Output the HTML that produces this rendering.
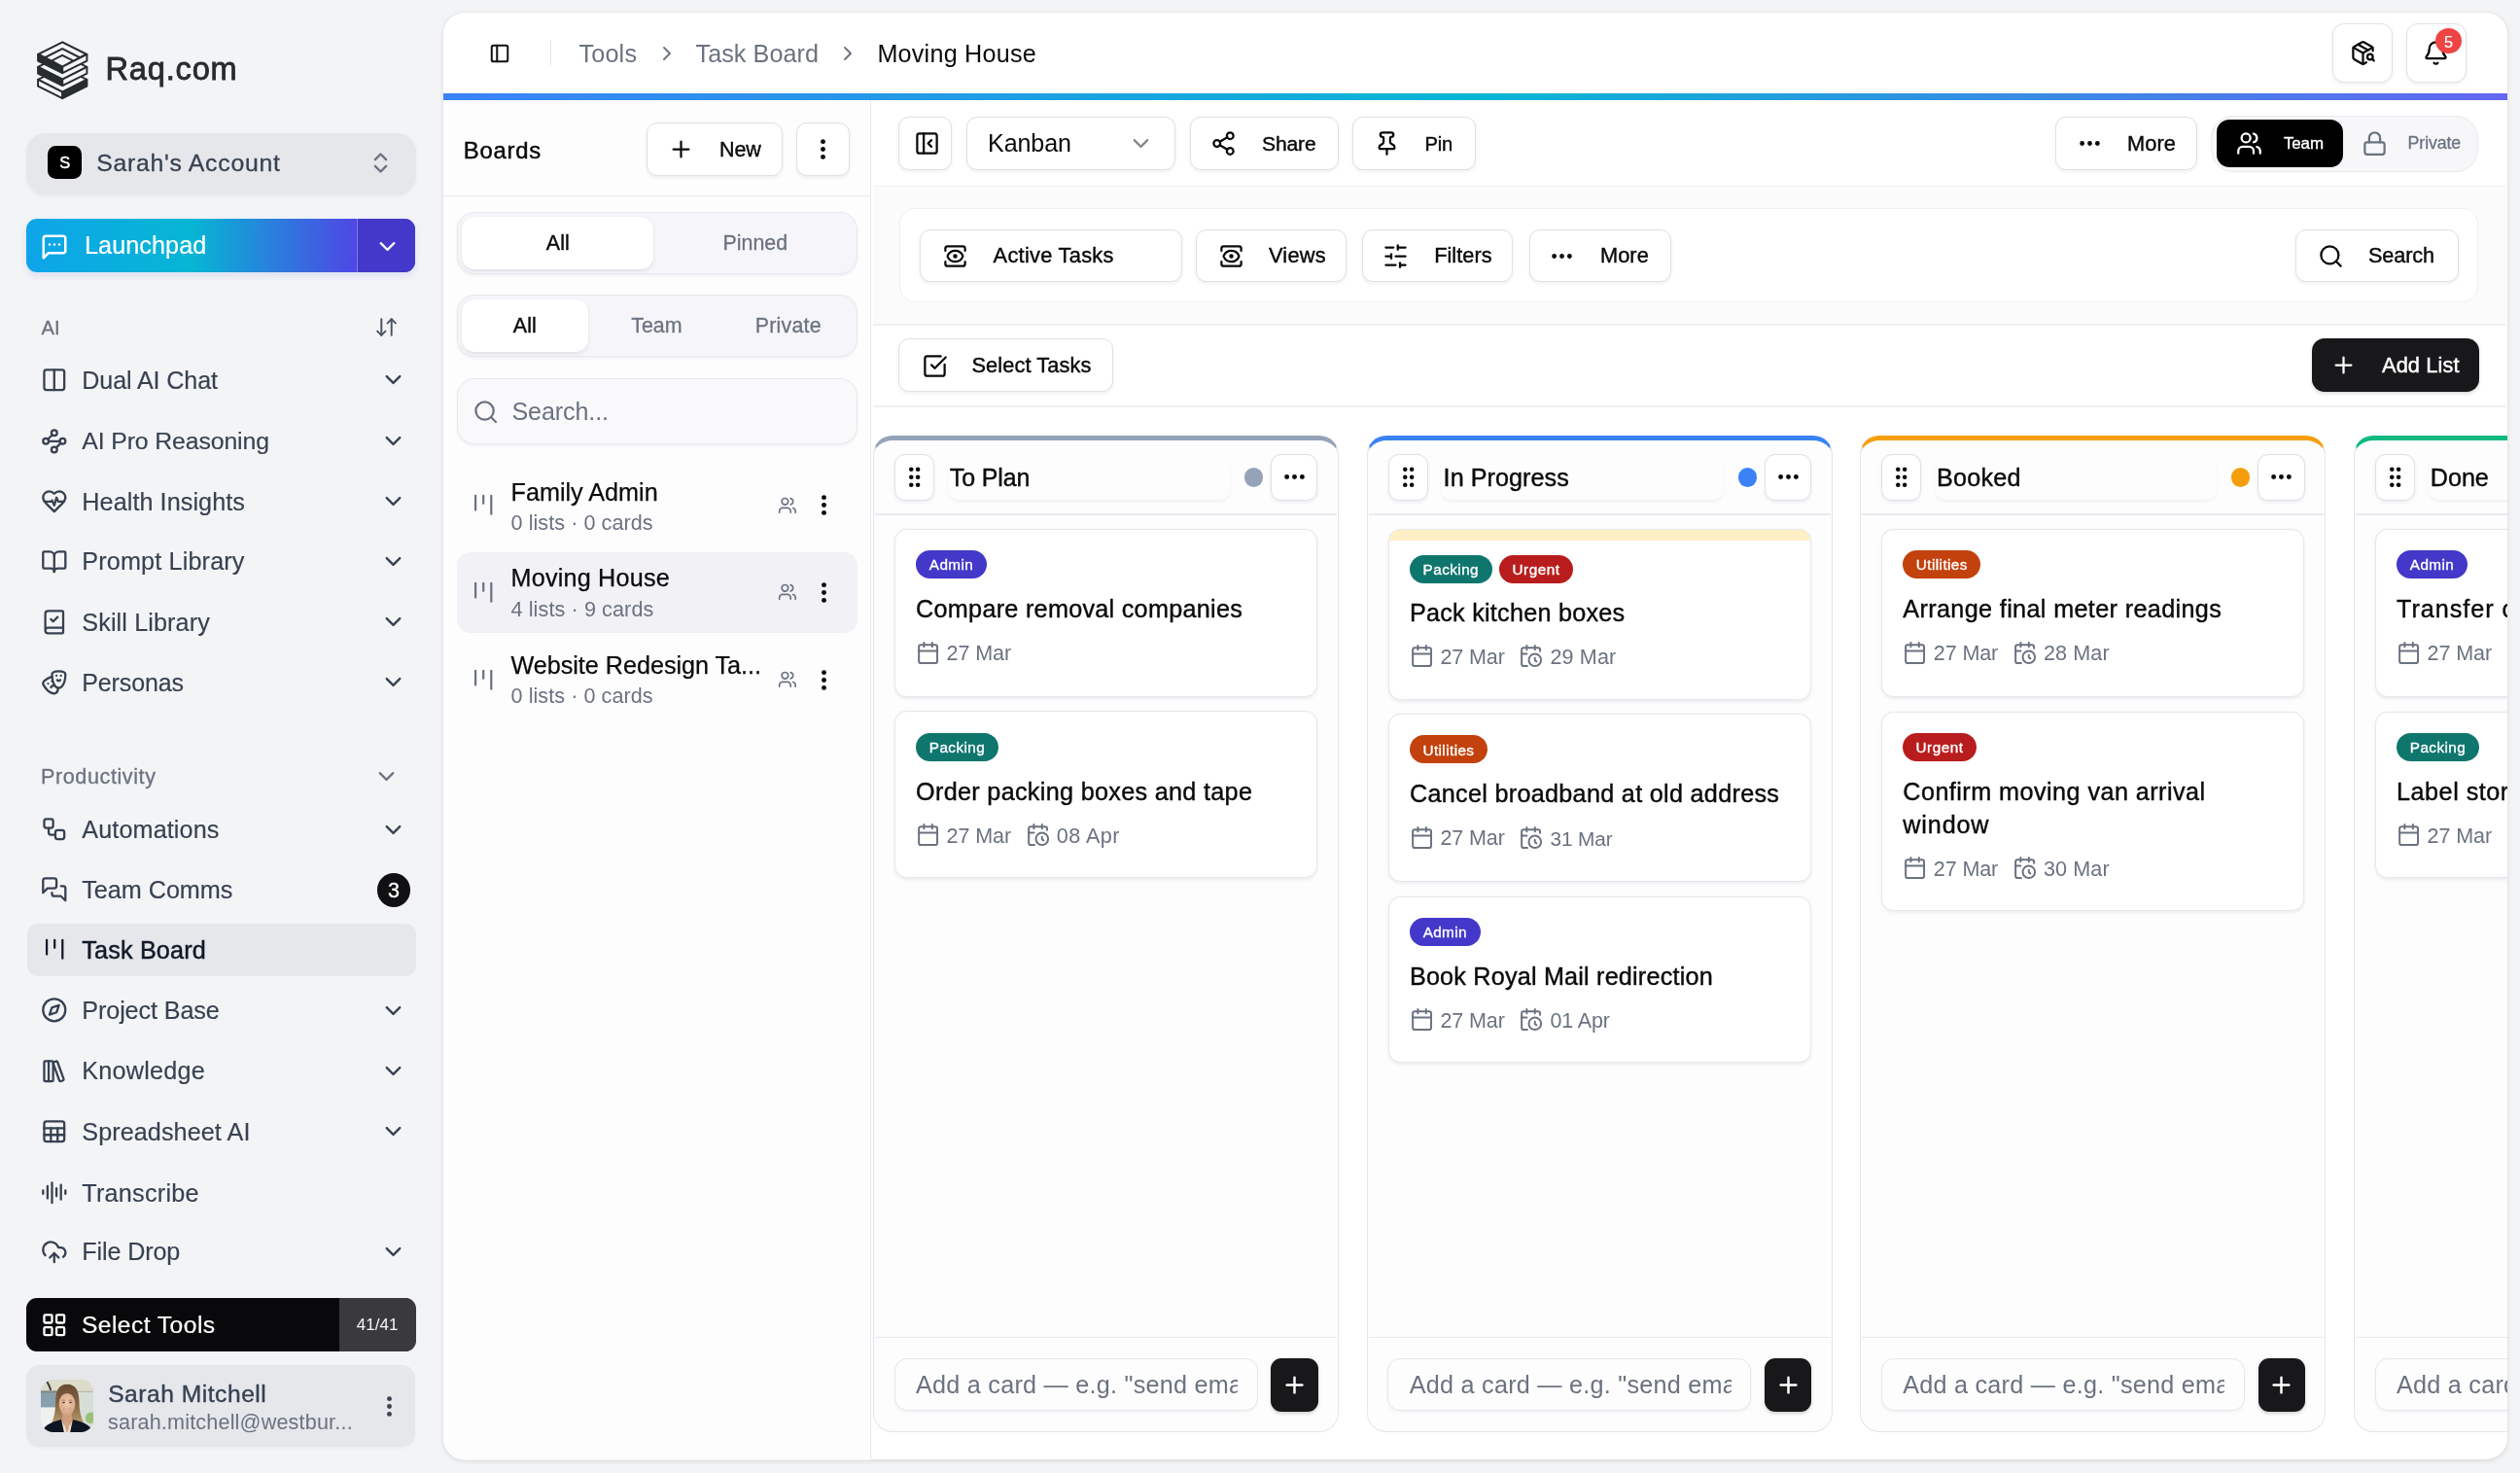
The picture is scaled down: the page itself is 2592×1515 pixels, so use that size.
<!DOCTYPE html>
<html lang="en"><head><meta charset="utf-8"><title>Task Board - Moving House</title>
<style>
html,body{margin:0;padding:0}
body{width:2592px;height:1515px;position:relative;overflow:hidden;background:#f3f4f6;font-family:"Liberation Sans",sans-serif;}
.t{position:absolute;white-space:nowrap;display:block}
.i{position:absolute;display:block;overflow:visible}
.b{position:absolute;box-sizing:border-box}
.btn{position:absolute;box-sizing:border-box;background:#fff;border:1.8px solid #e0e0e8;border-radius:11px;box-shadow:0 1.8px 3.6px rgba(15,23,42,.065)}
.clip{position:absolute;left:0;top:0;width:2592px;height:1515px;clip-path:inset(13.4px 13px 13.6px 456px round 21.6px)}
#app,#txt{position:absolute;left:0;top:0;width:2592px;height:1515px}
#txt{will-change:transform}
</style></head>
<body>
<div id="app">
<svg class="i" style="left:37.9px;top:41.9px" width="52.6" height="60.2" viewBox="120 120 1076 1232"><g stroke="#282d30" stroke-width="40" stroke-linejoin="round"><polygon points="657,679 1172,937 657,1195 142,937" fill="#f3f4f6"/><polygon points="142,937 657,1195 657,1330 142,1072" fill="#f3f4f6"/><polygon points="657,1195 1172,937 1172,1072 657,1330" fill="#282d30"/><polygon points="657,413 1172,671 657,929 142,671" fill="#f3f4f6"/><polygon points="142,671 657,929 657,1064 142,806" fill="#282d30"/><polygon points="657,929 1172,671 1172,806 657,1064" fill="#f3f4f6"/><polygon points="657,147 1172,405 657,663 142,405" fill="#282d30"/><polygon points="142,405 657,663 657,798 142,540" fill="#282d30"/><polygon points="657,663 1172,405 1172,540 657,798" fill="#f3f4f6"/><g stroke="none" fill="#f3f4f6"><polygon points="655,172 1114,402 1023,448 655,264 287,448 196,402"/><polygon points="655,310 977,471 886,517 655,402 424,517 333,471"/><polygon points="655,447 840,541 655,640 470,541"/></g></g></svg>
<div class="b" style="left:27px;top:136.6px;width:400.6px;height:63px;background:#e5e7eb;border-radius:20px;box-shadow:0 1.8px 3.6px rgba(0,0,0,.05)"></div>
<div class="b" style="left:49.4px;top:150px;width:34.6px;height:34.4px;background:#000;border-radius:8.5px"></div>
<svg class="i" style="left:378.1px;top:153.9px" width="27" height="27" viewBox="0 0 24 24" fill="none" stroke="#6b7280" stroke-width="2.1" stroke-linecap="round" stroke-linejoin="round"><path d="m7 15 5 5 5-5"/><path d="m7 9 5-5 5 5"/></svg>
<div class="b" style="left:27px;top:225px;width:400.3px;height:55px;border-radius:11px;background:linear-gradient(90deg,#0ea5e9 0%,#06b6d4 42.5%,#4f46e5 85%,#4f46e5 100%);box-shadow:0 3.6px 7px rgba(60,90,220,.12)"></div>
<div class="b" style="left:367px;top:225px;width:60.3px;height:55px;border-radius:0 11px 11px 0;background:#4338ca;border-left:1.5px solid rgba(255,255,255,.35)"></div>
<svg class="i" style="left:40.9px;top:239.3px" width="30" height="30" viewBox="0 0 24 24" fill="none" stroke="#fff" stroke-width="2" stroke-linecap="round" stroke-linejoin="round"><path d="M21 15a2 2 0 0 1-2 2H7l-4 4V5a2 2 0 0 1 2-2h14a2 2 0 0 1 2 2z"/><path d="M8 10h.01"/><path d="M12 10h.01"/><path d="M16 10h.01"/></svg>
<svg class="i" style="left:385.3px;top:239.5px" width="27" height="27" viewBox="0 0 24 24" fill="none" stroke="#fff" stroke-width="2" stroke-linecap="round" stroke-linejoin="round"><path d="m6 9 6 6 6-6"/></svg>
<svg class="i" style="left:384.5px;top:324px" width="25" height="25" viewBox="0 0 24 24" fill="none" stroke="#4b5563" stroke-width="1.9" stroke-linecap="round" stroke-linejoin="round"><path d="m3 16 4 4 4-4"/><path d="M7 20V4"/><path d="m21 8-4-4-4 4"/><path d="M17 4v16"/></svg>
<div class="b" style="left:28px;top:949.6px;width:400px;height:54.9px;background:#e5e7eb;border-radius:11px"></div>
<svg class="i" style="left:42.4px;top:376.8px" width="27.6" height="27.6" viewBox="0 0 24 24" fill="none" stroke="#374151" stroke-width="2" stroke-linecap="round" stroke-linejoin="round"><rect width="18" height="18" x="3" y="3" rx="2"/><path d="M12 3v18"/></svg>
<svg class="i" style="left:390.5px;top:377.1px" width="27" height="27" viewBox="0 0 24 24" fill="none" stroke="#374151" stroke-width="2.1" stroke-linecap="round" stroke-linejoin="round"><path d="m6 9 6 6 6-6"/></svg>
<svg class="i" style="left:42.4px;top:439.6px" width="27.6" height="27.6" viewBox="0 0 24 24" fill="none" stroke="#374151" stroke-width="2" stroke-linecap="round" stroke-linejoin="round"><circle cx="12" cy="4.5" r="2.5"/><path d="m10.2 6.3-3.9 3.9"/><circle cx="4.5" cy="12" r="2.5"/><path d="M7 12h10"/><circle cx="19.5" cy="12" r="2.5"/><path d="m13.8 17.7 3.9-3.9"/><circle cx="12" cy="19.5" r="2.5"/></svg>
<svg class="i" style="left:390.5px;top:439.9px" width="27" height="27" viewBox="0 0 24 24" fill="none" stroke="#374151" stroke-width="2.1" stroke-linecap="round" stroke-linejoin="round"><path d="m6 9 6 6 6-6"/></svg>
<svg class="i" style="left:42.4px;top:501.6px" width="27.6" height="27.6" viewBox="0 0 24 24" fill="none" stroke="#374151" stroke-width="2" stroke-linecap="round" stroke-linejoin="round"><path d="M19 14c1.49-1.46 3-3.21 3-5.5A5.5 5.5 0 0 0 16.5 3c-1.76 0-3 .5-4.5 2-1.5-1.5-2.74-2-4.5-2A5.5 5.5 0 0 0 2 8.5c0 2.3 1.5 4.05 3 5.5l7 7Z"/><path d="M3.22 12H9.5l.5-1 2 4.5 2-7 1.5 3.5h5.27"/></svg>
<svg class="i" style="left:390.5px;top:501.9px" width="27" height="27" viewBox="0 0 24 24" fill="none" stroke="#374151" stroke-width="2.1" stroke-linecap="round" stroke-linejoin="round"><path d="m6 9 6 6 6-6"/></svg>
<svg class="i" style="left:42.4px;top:563.5px" width="27.6" height="27.6" viewBox="0 0 24 24" fill="none" stroke="#374151" stroke-width="2" stroke-linecap="round" stroke-linejoin="round"><path d="M12 7v14"/><path d="M3 18a1 1 0 0 1-1-1V4a1 1 0 0 1 1-1h5a4 4 0 0 1 4 4 4 4 0 0 1 4-4h5a1 1 0 0 1 1 1v13a1 1 0 0 1-1 1h-6a3 3 0 0 0-3 3 3 3 0 0 0-3-3z"/></svg>
<svg class="i" style="left:390.5px;top:563.8px" width="27" height="27" viewBox="0 0 24 24" fill="none" stroke="#374151" stroke-width="2.1" stroke-linecap="round" stroke-linejoin="round"><path d="m6 9 6 6 6-6"/></svg>
<svg class="i" style="left:42.4px;top:625.6px" width="27.6" height="27.6" viewBox="0 0 24 24" fill="none" stroke="#374151" stroke-width="2" stroke-linecap="round" stroke-linejoin="round"><path d="M4 19.5v-15A2.5 2.5 0 0 1 6.5 2H19a1 1 0 0 1 1 1v18a1 1 0 0 1-1 1H6.5a1 1 0 0 1 0-5H20"/><path d="m9 9.5 2 2 4-4"/></svg>
<svg class="i" style="left:390.5px;top:625.9px" width="27" height="27" viewBox="0 0 24 24" fill="none" stroke="#374151" stroke-width="2.1" stroke-linecap="round" stroke-linejoin="round"><path d="m6 9 6 6 6-6"/></svg>
<svg class="i" style="left:42.4px;top:687.5px" width="27.6" height="27.6" viewBox="0 0 24 24" fill="none" stroke="#374151" stroke-width="2" stroke-linecap="round" stroke-linejoin="round"><path d="M10 11h.01"/><path d="M14 6h.01"/><path d="M18 6h.01"/><path d="M6.5 13.1h.01"/><path d="M22 5c0 9-4 12-6 12s-6-3-6-12c0-2 2-3 6-3s6 1 6 3"/><path d="M17.4 9.9c-.8.8-2 .8-2.8 0"/><path d="M10.1 7.1C9 7.2 7.7 7.7 6 8.6c-3.5 2-4.7 3.9-3.7 5.6 4.5 7.8 9.5 8.4 11.2 7.4.9-.5 1.9-2.1 1.9-4.7"/><path d="M9.1 16.5c.3-1.1 1.4-1.7 2.4-1.4"/></svg>
<svg class="i" style="left:390.5px;top:687.8px" width="27" height="27" viewBox="0 0 24 24" fill="none" stroke="#374151" stroke-width="2.1" stroke-linecap="round" stroke-linejoin="round"><path d="m6 9 6 6 6-6"/></svg>
<svg class="i" style="left:42.4px;top:839.2px" width="27.6" height="27.6" viewBox="0 0 24 24" fill="none" stroke="#374151" stroke-width="2" stroke-linecap="round" stroke-linejoin="round"><rect width="8" height="8" x="3" y="3" rx="2"/><path d="M7 11v4a2 2 0 0 0 2 2h4"/><rect width="8" height="8" x="13" y="13" rx="2"/></svg>
<svg class="i" style="left:390.5px;top:839.5px" width="27" height="27" viewBox="0 0 24 24" fill="none" stroke="#374151" stroke-width="2.1" stroke-linecap="round" stroke-linejoin="round"><path d="m6 9 6 6 6-6"/></svg>
<svg class="i" style="left:42.4px;top:901.4px" width="27.6" height="27.6" viewBox="0 0 24 24" fill="none" stroke="#374151" stroke-width="2" stroke-linecap="round" stroke-linejoin="round"><path d="M14 9a2 2 0 0 1-2 2H6l-4 4V4a2 2 0 0 1 2-2h8a2 2 0 0 1 2 2z"/><path d="M18 9h2a2 2 0 0 1 2 2v11l-4-4h-6a2 2 0 0 1-2-2v-1"/></svg>
<svg class="i" style="left:40px;top:959.8px" width="32.4" height="32.4" viewBox="0 0 24 24" fill="none" stroke="#111827" stroke-width="1.65" stroke-linecap="round" stroke-linejoin="round"><path d="M6 5v11"/><path d="M12 5v6"/><path d="M18 5v14"/></svg>
<svg class="i" style="left:42.4px;top:1025.2px" width="27.6" height="27.6" viewBox="0 0 24 24" fill="none" stroke="#374151" stroke-width="2" stroke-linecap="round" stroke-linejoin="round"><circle cx="12" cy="12" r="10"/><polygon points="16.24 7.76 14.12 14.12 7.76 16.24 9.88 9.88 16.24 7.76"/></svg>
<svg class="i" style="left:390.5px;top:1025.5px" width="27" height="27" viewBox="0 0 24 24" fill="none" stroke="#374151" stroke-width="2.1" stroke-linecap="round" stroke-linejoin="round"><path d="m6 9 6 6 6-6"/></svg>
<svg class="i" style="left:42.4px;top:1087.5px" width="27.6" height="27.6" viewBox="0 0 24 24" fill="none" stroke="#374151" stroke-width="2" stroke-linecap="round" stroke-linejoin="round"><rect width="8" height="18" x="3" y="3" rx="1"/><path d="M7 3v18"/><path d="M20.4 18.9c.2.5-.1 1.1-.6 1.3l-1.9.7c-.5.2-1.1-.1-1.3-.6L11.1 5.1c-.2-.5.1-1.1.6-1.3l1.9-.7c.5-.2 1.1.1 1.3.6Z"/></svg>
<svg class="i" style="left:390.5px;top:1087.8px" width="27" height="27" viewBox="0 0 24 24" fill="none" stroke="#374151" stroke-width="2.1" stroke-linecap="round" stroke-linejoin="round"><path d="m6 9 6 6 6-6"/></svg>
<svg class="i" style="left:42.4px;top:1150px" width="27.6" height="27.6" viewBox="0 0 24 24" fill="none" stroke="#374151" stroke-width="2" stroke-linecap="round" stroke-linejoin="round"><rect width="18" height="18" x="3" y="3" rx="2" ry="2"/><line x1="3" x2="21" y1="9" y2="9"/><line x1="3" x2="21" y1="15" y2="15"/><line x1="9" x2="9" y1="9" y2="21"/><line x1="15" x2="15" y1="9" y2="21"/></svg>
<svg class="i" style="left:390.5px;top:1150.3px" width="27" height="27" viewBox="0 0 24 24" fill="none" stroke="#374151" stroke-width="2.1" stroke-linecap="round" stroke-linejoin="round"><path d="m6 9 6 6 6-6"/></svg>
<svg class="i" style="left:42.4px;top:1212.8px" width="27.6" height="27.6" viewBox="0 0 24 24" fill="none" stroke="#374151" stroke-width="2" stroke-linecap="round" stroke-linejoin="round"><path d="M2 10v3"/><path d="M6 6v11"/><path d="M10 3v18"/><path d="M14 8v7"/><path d="M18 5v13"/><path d="M22 10v3"/></svg>
<svg class="i" style="left:42.4px;top:1273.5px" width="27.6" height="27.6" viewBox="0 0 24 24" fill="none" stroke="#374151" stroke-width="2" stroke-linecap="round" stroke-linejoin="round"><path d="M12 13v8"/><path d="M4 14.899A7 7 0 1 1 15.71 8h1.79a4.5 4.5 0 0 1 2.5 8.242"/><path d="m8 17 4-4 4 4"/></svg>
<svg class="i" style="left:390.5px;top:1273.8px" width="27" height="27" viewBox="0 0 24 24" fill="none" stroke="#374151" stroke-width="2.1" stroke-linecap="round" stroke-linejoin="round"><path d="m6 9 6 6 6-6"/></svg>
<svg class="i" style="left:383.5px;top:784.9px" width="27" height="27" viewBox="0 0 24 24" fill="none" stroke="#6b7280" stroke-width="2" stroke-linecap="round" stroke-linejoin="round"><path d="m6 9 6 6 6-6"/></svg>
<div class="b" style="left:387.6px;top:898.3px;width:34.4px;height:34.4px;background:#111113;border-radius:50%"></div>
<div class="b" style="left:26.8px;top:1335px;width:400.7px;height:55.3px;background:#09090b;border-radius:11px"></div>
<div class="b" style="left:349px;top:1335px;width:78.5px;height:55.3px;background:#3a3a3e;border-radius:0 11px 11px 0"></div>
<svg class="i" style="left:41.9px;top:1348.9px" width="27.6" height="27.6" viewBox="0 0 24 24" fill="none" stroke="#fff" stroke-width="2" stroke-linecap="round" stroke-linejoin="round"><rect width="7" height="7" x="3" y="3" rx="1"/><rect width="7" height="7" x="14" y="3" rx="1"/><rect width="7" height="7" x="14" y="14" rx="1"/><rect width="7" height="7" x="3" y="14" rx="1"/></svg>
<div class="b" style="left:26.8px;top:1404px;width:400.7px;height:83.6px;background:#e5e7eb;border-radius:14px;box-shadow:0 1.8px 3px rgba(0,0,0,.03)"></div>
<svg class="i" style="left:42px;top:1418.8px;border-radius:12.6px;overflow:hidden" width="54" height="54" viewBox="0 0 100 100"><defs><filter id="avb" x="-10%" y="-10%" width="120%" height="120%"><feGaussianBlur stdDeviation="1.1"/></filter><linearGradient id="avh" x1="0" y1="0" x2="0" y2="1"><stop offset="0" stop-color="#674a32"/><stop offset=".5" stop-color="#86653f"/><stop offset="1" stop-color="#b79a70"/></linearGradient><radialGradient id="avs" cx=".5" cy=".42" r=".65"><stop offset="0" stop-color="#efc8ac"/><stop offset="1" stop-color="#d39f80"/></radialGradient></defs><rect width="100" height="100" fill="#dedccb"/><g filter="url(#avb)"><rect x="-5" y="-5" width="110" height="28" fill="#dddbc9"/><rect x="70" y="22" width="35" height="83" fill="#d7ddd7"/><rect x="-5" y="25" width="36" height="28" fill="#889fae"/><rect x="-5" y="21" width="40" height="4.5" fill="#7d8a86"/><rect x="70" y="21.5" width="35" height="2.5" fill="#b4bcb4"/><rect x="-5" y="53" width="34" height="52" fill="#eff1f0"/><ellipse cx="95" cy="73" rx="10" ry="11" fill="#9cc076"/><path d="M12 4 L16 12 L19 20" stroke="#3a3a36" stroke-width="3.6" fill="none"/><path d="M50 9 C33 9 28 24 28 42 C28 58 26 70 20 84 L82 84 C76 70 73 58 73 42 C73 24 68 9 50 9Z" fill="url(#avh)"/><path d="M42 60 L58 60 L61 86 L39 86Z" fill="#cf9c7d"/><ellipse cx="50" cy="46.5" rx="15.6" ry="21" fill="url(#avs)"/><path d="M33.5 44 C32 26 42 21.5 50 21.5 C58 21.5 68 26 66.5 44 C64 31 58 26.5 50 26.5 C42 26.5 36 31 33.5 44Z" fill="#76573a"/><ellipse cx="43.6" cy="43.4" rx="2.7" ry="1.3" fill="#4b3527"/><ellipse cx="56.4" cy="43.4" rx="2.7" ry="1.3" fill="#4b3527"/><path d="M40 39.6 Q43.5 38 47 39.6" stroke="#6a4c35" stroke-width="1" fill="none"/><path d="M53 39.6 Q56.5 38 60 39.6" stroke="#6a4c35" stroke-width="1" fill="none"/><path d="M42.6 55.4 Q50 62.6 57.4 55.4 Q50 58.4 42.6 55.4Z" fill="#fbf3f1" stroke="#bf7a6b" stroke-width=".8"/><path d="M40 78 L50 104 L33 104Z" fill="#efe5cf"/><path d="M60 78 L50 104 L67 104Z" fill="#efe5cf"/><path d="M44 80 L50 104 L56 80Z" fill="#d6a384"/><path d="M2 104 C4 88 16 82 39 76 L45 104Z" fill="#0e1524"/><path d="M99 104 C98 89 86 82 61 76 L55 104Z" fill="#0e1524"/></g></svg>
<svg class="i" style="left:387.1px;top:1432.9px" width="27" height="27" viewBox="0 0 24 24" fill="#374151" stroke="#374151" stroke-width="2.4" stroke-linecap="round" stroke-linejoin="round"><circle cx="12" cy="12" r="1"/><circle cx="12" cy="5" r="1"/><circle cx="12" cy="19" r="1"/></svg>
<div class="b" style="left:456px;top:13.4px;width:2123px;height:1488px;background:#fff;border-radius:21.6px;box-shadow:0 1.8px 5px rgba(0,0,0,.10),0 0 1.5px rgba(0,0,0,.08)"></div>
<div class="clip">
<svg class="i" style="left:502.7px;top:43.6px" width="22" height="22" viewBox="0 0 24 24" fill="none" stroke="#111" stroke-width="2.2" stroke-linecap="round" stroke-linejoin="round"><rect width="18" height="18" x="3" y="3" rx="2"/><path d="M9 3v18"/></svg>
<div class="b" style="left:565.5px;top:40.6px;width:1.5px;height:26.7px;background:#e5e7eb"></div>
<svg class="i" style="left:674px;top:42.6px" width="24" height="24" viewBox="0 0 24 24" fill="none" stroke="#6b7280" stroke-width="1.9" stroke-linecap="round" stroke-linejoin="round"><path d="m9 18 6-6-6-6"/></svg>
<svg class="i" style="left:859.8px;top:42.6px" width="24" height="24" viewBox="0 0 24 24" fill="none" stroke="#6b7280" stroke-width="1.9" stroke-linecap="round" stroke-linejoin="round"><path d="m9 18 6-6-6-6"/></svg>
<div class="btn" style="left:2398.8px;top:23.9px;width:62px;height:61.2px;border-radius:12px"></div>
<svg class="i" style="left:2416.5px;top:40.9px" width="27" height="27" viewBox="0 0 24 24" fill="none" stroke="#0a0a0a" stroke-width="2" stroke-linecap="round" stroke-linejoin="round"><path d="M21 10V8a2 2 0 0 0-1-1.73l-7-4a2 2 0 0 0-2 0l-7 4A2 2 0 0 0 3 8v8a2 2 0 0 0 1 1.73l7 4a2 2 0 0 0 2 0l2-1.14"/><path d="m7.5 4.27 9 5.15"/><polyline points="3.29 7 12 12 20.71 7"/><line x1="12" x2="12" y1="22" y2="12"/><circle cx="18.5" cy="15.5" r="2.5"/><path d="M20.27 17.27 22 19"/></svg>
<div class="btn" style="left:2474.7px;top:23.9px;width:62px;height:61.2px;border-radius:12px"></div>
<svg class="i" style="left:2491.7px;top:41.3px" width="27" height="27" viewBox="0 0 24 24" fill="none" stroke="#0a0a0a" stroke-width="2" stroke-linecap="round" stroke-linejoin="round"><path d="M10.268 21a2 2 0 0 0 3.464 0"/><path d="M3.262 15.326A1 1 0 0 0 4 17h16a1 1 0 0 0 .74-1.673C19.41 13.956 18 12.499 18 8A6 6 0 0 0 6 8c0 4.499-1.411 5.956-2.738 7.326"/></svg>
<div class="b" style="left:2505px;top:28.9px;width:27px;height:26.6px;background:#ef4444;border-radius:50%"></div>
<div class="b" style="left:456px;top:96px;width:2123px;height:7.3px;background:linear-gradient(90deg,#3b82f6 0%,#06b6d4 50%,#6366f1 100%)"></div>
<div class="b" style="left:456px;top:103.3px;width:440.2px;height:1398.3px;background:#fdfdfe;border-right:1.8px solid #e8e8ee"></div>
<div class="b" style="left:456px;top:200.5px;width:439px;height:1.8px;background:#e8e8ee"></div>
<div class="btn" style="left:664.9px;top:125.8px;width:140.0px;height:55.1px;"></div>
<svg class="i" style="left:687.2px;top:139.8px" width="27" height="27" viewBox="0 0 24 24" fill="none" stroke="#0a0a0a" stroke-width="2" stroke-linecap="round" stroke-linejoin="round"><path d="M5 12h14"/><path d="M12 5v14"/></svg>
<div class="btn" style="left:819.2px;top:125.8px;width:54.6px;height:55.1px;"></div>
<svg class="i" style="left:833px;top:139.8px" width="27" height="27" viewBox="0 0 24 24" fill="#0a0a0a" stroke="#0a0a0a" stroke-width="2.4" stroke-linecap="round" stroke-linejoin="round"><circle cx="12" cy="12" r="1"/><circle cx="12" cy="5" r="1"/><circle cx="12" cy="19" r="1"/></svg>
<div class="b" style="left:470.2px;top:217.9px;width:411.4px;height:63.7px;background:#f6f6fa;border:1.8px solid #e8e8ee;border-radius:18px;box-shadow:0 1.8px 3px rgba(15,23,42,.05)"></div>
<div class="b" style="left:474.8px;top:222.8px;width:197.6px;height:53.8px;background:#fff;border-radius:13px;box-shadow:0 1.8px 3.6px rgba(15,23,42,.10)"></div>
<div class="b" style="left:470.2px;top:303.2px;width:411.4px;height:64.2px;background:#f6f6fa;border:1.8px solid #e8e8ee;border-radius:18px;box-shadow:0 1.8px 3px rgba(15,23,42,.05)"></div>
<div class="b" style="left:474.8px;top:308.3px;width:130.3px;height:53.9px;background:#fff;border-radius:13px;box-shadow:0 1.8px 3.6px rgba(15,23,42,.10)"></div>
<div class="b" style="left:470.2px;top:389.2px;width:411.4px;height:67.8px;background:#f9f9fb;border:1.8px solid #e8e8ee;border-radius:18px;box-shadow:0 1.8px 3.6px rgba(15,23,42,.05)"></div>
<svg class="i" style="left:486.3px;top:409.5px" width="27.4" height="27.4" viewBox="0 0 24 24" fill="none" stroke="#6b7280" stroke-width="2" stroke-linecap="round" stroke-linejoin="round"><circle cx="11" cy="11" r="8"/><path d="m21 21-4.3-4.3"/></svg>
<svg class="i" style="left:480.9px;top:502.9px" width="32.4" height="32.4" viewBox="0 0 24 24" fill="none" stroke="#6b7280" stroke-width="1.65" stroke-linecap="round" stroke-linejoin="round"><path d="M6 5v11"/><path d="M12 5v6"/><path d="M18 5v14"/></svg>
<svg class="i" style="left:799.7px;top:509.6px" width="19.8" height="19.8" viewBox="0 0 24 24" fill="none" stroke="#6b7280" stroke-width="2" stroke-linecap="round" stroke-linejoin="round"><path d="M16 21v-2a4 4 0 0 0-4-4H6a4 4 0 0 0-4 4v2"/><circle cx="9" cy="7" r="4"/><path d="M22 21v-2a4 4 0 0 0-3-3.87"/><path d="M16 3.13a4 4 0 0 1 0 7.75"/></svg>
<svg class="i" style="left:834.2px;top:506px" width="27" height="27" viewBox="0 0 24 24" fill="#0a0a0a" stroke="#0a0a0a" stroke-width="2.4" stroke-linecap="round" stroke-linejoin="round"><circle cx="12" cy="12" r="1"/><circle cx="12" cy="5" r="1"/><circle cx="12" cy="19" r="1"/></svg>
<div class="b" style="left:470.1px;top:568.4px;width:411.9px;height:82.7px;background:#f1f1f6;border-radius:14px"></div>
<svg class="i" style="left:480.9px;top:592.7px" width="32.4" height="32.4" viewBox="0 0 24 24" fill="none" stroke="#6b7280" stroke-width="1.65" stroke-linecap="round" stroke-linejoin="round"><path d="M6 5v11"/><path d="M12 5v6"/><path d="M18 5v14"/></svg>
<svg class="i" style="left:799.7px;top:599.4px" width="19.8" height="19.8" viewBox="0 0 24 24" fill="none" stroke="#6b7280" stroke-width="2" stroke-linecap="round" stroke-linejoin="round"><path d="M16 21v-2a4 4 0 0 0-4-4H6a4 4 0 0 0-4 4v2"/><circle cx="9" cy="7" r="4"/><path d="M22 21v-2a4 4 0 0 0-3-3.87"/><path d="M16 3.13a4 4 0 0 1 0 7.75"/></svg>
<svg class="i" style="left:834.2px;top:595.8px" width="27" height="27" viewBox="0 0 24 24" fill="#0a0a0a" stroke="#0a0a0a" stroke-width="2.4" stroke-linecap="round" stroke-linejoin="round"><circle cx="12" cy="12" r="1"/><circle cx="12" cy="5" r="1"/><circle cx="12" cy="19" r="1"/></svg>
<svg class="i" style="left:480.9px;top:682.5px" width="32.4" height="32.4" viewBox="0 0 24 24" fill="none" stroke="#6b7280" stroke-width="1.65" stroke-linecap="round" stroke-linejoin="round"><path d="M6 5v11"/><path d="M12 5v6"/><path d="M18 5v14"/></svg>
<svg class="i" style="left:799.7px;top:689.2px" width="19.8" height="19.8" viewBox="0 0 24 24" fill="none" stroke="#6b7280" stroke-width="2" stroke-linecap="round" stroke-linejoin="round"><path d="M16 21v-2a4 4 0 0 0-4-4H6a4 4 0 0 0-4 4v2"/><circle cx="9" cy="7" r="4"/><path d="M22 21v-2a4 4 0 0 0-3-3.87"/><path d="M16 3.13a4 4 0 0 1 0 7.75"/></svg>
<svg class="i" style="left:834.2px;top:685.6px" width="27" height="27" viewBox="0 0 24 24" fill="#0a0a0a" stroke="#0a0a0a" stroke-width="2.4" stroke-linecap="round" stroke-linejoin="round"><circle cx="12" cy="12" r="1"/><circle cx="12" cy="5" r="1"/><circle cx="12" cy="19" r="1"/></svg>
<div class="b" style="left:898px;top:190.5px;width:1680.4px;height:1.8px;background:#f0f0f4"></div>
<div class="btn" style="left:924.3px;top:120.1px;width:54.9px;height:55.1px;"></div>
<svg class="i" style="left:939.5px;top:134.1px" width="27" height="27" viewBox="0 0 24 24" fill="none" stroke="#0a0a0a" stroke-width="2" stroke-linecap="round" stroke-linejoin="round"><rect width="18" height="18" x="3" y="3" rx="2"/><path d="M9 3v18"/><path d="m16 15-3-3 3-3"/></svg>
<div class="btn" style="left:993.5px;top:120.1px;width:215.0px;height:55.1px;"></div>
<svg class="i" style="left:1159.7px;top:134.1px" width="27" height="27" viewBox="0 0 24 24" fill="none" stroke="#858588" stroke-width="1.9" stroke-linecap="round" stroke-linejoin="round"><path d="m6 9 6 6 6-6"/></svg>
<div class="btn" style="left:1223.5px;top:120.1px;width:153.0px;height:55.1px;"></div>
<svg class="i" style="left:1245.25px;top:133.9px" width="27" height="27" viewBox="0 0 24 24" fill="none" stroke="#0a0a0a" stroke-width="2" stroke-linecap="round" stroke-linejoin="round"><circle cx="18" cy="5" r="3"/><circle cx="6" cy="12" r="3"/><circle cx="18" cy="19" r="3"/><line x1="8.59" x2="15.42" y1="13.51" y2="17.49"/><line x1="15.41" x2="8.59" y1="6.51" y2="10.49"/></svg>
<div class="btn" style="left:1390.8px;top:120.1px;width:127.1px;height:55.1px;"></div>
<svg class="i" style="left:1413.2px;top:133.9px" width="27" height="27" viewBox="0 0 24 24" fill="none" stroke="#0a0a0a" stroke-width="2" stroke-linecap="round" stroke-linejoin="round"><path d="M12 17v5"/><path d="M9 10.76a2 2 0 0 1-1.11 1.79l-1.78.9A2 2 0 0 0 5 15.24V16a1 1 0 0 0 1 1h12a1 1 0 0 0 1-1v-.76a2 2 0 0 0-1.11-1.79l-1.78-.9A2 2 0 0 1 15 10.76V7a1 1 0 0 1 1-1 2 2 0 0 0 0-4H8a2 2 0 0 0 0 4 1 1 0 0 1 1 1z"/></svg>
<div class="btn" style="left:2113.8px;top:120.1px;width:146.2px;height:55.1px;"></div>
<svg class="i" style="left:2136.3px;top:134.1px" width="27" height="27" viewBox="0 0 24 24" fill="#0a0a0a" stroke="#0a0a0a" stroke-width="2.3" stroke-linecap="round" stroke-linejoin="round"><circle cx="12" cy="12" r="1"/><circle cx="19" cy="12" r="1"/><circle cx="5" cy="12" r="1"/></svg>
<div class="b" style="left:2274.3px;top:118.7px;width:275.1px;height:57.9px;background:#f7f7fa;border:1.8px solid #e8e8ee;border-radius:23px"></div>
<div class="b" style="left:2280px;top:123px;width:130px;height:49.2px;background:#000;border-radius:13px"></div>
<svg class="i" style="left:2300px;top:134.1px" width="27" height="27" viewBox="0 0 24 24" fill="none" stroke="#fff" stroke-width="2" stroke-linecap="round" stroke-linejoin="round"><path d="M16 21v-2a4 4 0 0 0-4-4H6a4 4 0 0 0-4 4v2"/><circle cx="9" cy="7" r="4"/><path d="M22 21v-2a4 4 0 0 0-3-3.87"/><path d="M16 3.13a4 4 0 0 1 0 7.75"/></svg>
<svg class="i" style="left:2428.7px;top:133.7px" width="27" height="27" viewBox="0 0 24 24" fill="none" stroke="#6b7280" stroke-width="2" stroke-linecap="round" stroke-linejoin="round"><rect width="18" height="11" x="3" y="11" rx="2" ry="2"/><path d="M7 11V7a5 5 0 0 1 10 0v4"/></svg>
<div class="b" style="left:898px;top:192.3px;width:1680.4px;height:140.7px;background:#fbfbfc"></div>
<div class="b" style="left:898px;top:333px;width:1680.4px;height:1.8px;background:#f0f0f4"></div>
<div class="b" style="left:924.9px;top:213.6px;width:1624.5px;height:97.2px;background:#fff;border:1.8px solid #efeff3;border-radius:16px"></div>
<div class="btn" style="left:946.4px;top:235.8px;width:269.8px;height:54.3px;"></div>
<svg class="i" style="left:968.9px;top:249.5px" width="27" height="27" viewBox="0 0 24 24" fill="none" stroke="#0a0a0a" stroke-width="2" stroke-linecap="round" stroke-linejoin="round"><path d="M21 17v2a2 2 0 0 1-2 2H5a2 2 0 0 1-2-2v-2"/><path d="M21 7V5a2 2 0 0 0-2-2H5a2 2 0 0 0-2 2v2"/><circle cx="12" cy="12" r="1"/><path d="M18.944 12.33a1 1 0 0 0 0-.66 7.5 7.5 0 0 0-13.888 0 1 1 0 0 0 0 .66 7.5 7.5 0 0 0 13.888 0"/></svg>
<div class="btn" style="left:1230.4px;top:235.8px;width:155.1px;height:54.3px;"></div>
<svg class="i" style="left:1252.7px;top:249.5px" width="27" height="27" viewBox="0 0 24 24" fill="none" stroke="#0a0a0a" stroke-width="2" stroke-linecap="round" stroke-linejoin="round"><path d="M21 17v2a2 2 0 0 1-2 2H5a2 2 0 0 1-2-2v-2"/><path d="M21 7V5a2 2 0 0 0-2-2H5a2 2 0 0 0-2 2v2"/><circle cx="12" cy="12" r="1"/><path d="M18.944 12.33a1 1 0 0 0 0-.66 7.5 7.5 0 0 0-13.888 0 1 1 0 0 0 0 .66 7.5 7.5 0 0 0 13.888 0"/></svg>
<div class="btn" style="left:1401.1px;top:235.8px;width:155.4px;height:54.3px;"></div>
<svg class="i" style="left:1422.3px;top:249.5px" width="27" height="27" viewBox="0 0 24 24" fill="none" stroke="#0a0a0a" stroke-width="2" stroke-linecap="round" stroke-linejoin="round"><line x1="21" x2="14" y1="4" y2="4"/><line x1="10" x2="3" y1="4" y2="4"/><line x1="21" x2="12" y1="12" y2="12"/><line x1="8" x2="3" y1="12" y2="12"/><line x1="21" x2="16" y1="20" y2="20"/><line x1="12" x2="3" y1="20" y2="20"/><line x1="14" x2="14" y1="2" y2="6"/><line x1="8" x2="8" y1="10" y2="14"/><line x1="16" x2="16" y1="18" y2="22"/></svg>
<div class="btn" style="left:1572.5px;top:235.8px;width:146.5px;height:54.3px;"></div>
<svg class="i" style="left:1593.2px;top:249.5px" width="27" height="27" viewBox="0 0 24 24" fill="#0a0a0a" stroke="#0a0a0a" stroke-width="2.3" stroke-linecap="round" stroke-linejoin="round"><circle cx="12" cy="12" r="1"/><circle cx="19" cy="12" r="1"/><circle cx="5" cy="12" r="1"/></svg>
<div class="btn" style="left:2360.9px;top:235.8px;width:168.1px;height:54.3px;"></div>
<svg class="i" style="left:2384.3px;top:250px" width="27" height="27" viewBox="0 0 24 24" fill="none" stroke="#0a0a0a" stroke-width="2" stroke-linecap="round" stroke-linejoin="round"><circle cx="11" cy="11" r="8"/><path d="m21 21-4.3-4.3"/></svg>
<div class="btn" style="left:924.4px;top:347.9px;width:221.1px;height:55.5px;"></div>
<svg class="i" style="left:947.8px;top:362.5px" width="27" height="27" viewBox="0 0 24 24" fill="none" stroke="#0a0a0a" stroke-width="2" stroke-linecap="round" stroke-linejoin="round"><path d="M21 10.5V19a2 2 0 0 1-2 2H5a2 2 0 0 1-2-2V5a2 2 0 0 1 2-2h12.5"/><path d="m9 11 3 3L22 4"/></svg>
<div class="b" style="left:2377.5px;top:348px;width:172.5px;height:54.8px;background:#18181b;border-radius:13px;box-shadow:0 1.8px 3.6px rgba(0,0,0,.15)"></div>
<svg class="i" style="left:2397.2px;top:362.1px" width="27" height="27" viewBox="0 0 24 24" fill="none" stroke="#fff" stroke-width="2" stroke-linecap="round" stroke-linejoin="round"><path d="M5 12h14"/><path d="M12 5v14"/></svg>
<div class="b" style="left:898px;top:416.8px;width:1680.4px;height:1.8px;background:#f0f0f4"></div>
<div class="b" style="left:898.2px;top:447.6px;width:478.8px;height:1025.2px;background:#fdfdfe;border:1.8px solid #e4e4ec;border-top:5.6px solid #94a3b8;border-radius:20px"></div>
<div class="btn" style="left:920.0px;top:467.1px;width:41.0px;height:47.7px;border-radius:11px"></div>
<svg class="i" style="left:927.1px;top:477.2px" width="27.4" height="27.4" viewBox="0 0 24 24" fill="#0a0a0a" stroke="#0a0a0a" stroke-width="2" stroke-linecap="round" stroke-linejoin="round"><circle cx="9" cy="12" r="1"/><circle cx="9" cy="5" r="1"/><circle cx="9" cy="19" r="1"/><circle cx="15" cy="12" r="1"/><circle cx="15" cy="5" r="1"/><circle cx="15" cy="19" r="1"/></svg>
<div class="b" style="left:974.6px;top:471.3px;width:290.2px;height:43.2px;background:#fdfdfe;border-radius:11px;box-shadow:0 1.8px 3.6px rgba(15,23,42,.05)"></div>
<div class="b" style="left:1279.8px;top:481.4px;width:19.2px;height:19.2px;background:#94a3b8;border-radius:50%"></div>
<div class="btn" style="left:1306.9px;top:467.1px;width:48.6px;height:47.7px;border-radius:11px"></div>
<svg class="i" style="left:1317.7px;top:477.3px" width="27" height="27" viewBox="0 0 24 24" fill="#0a0a0a" stroke="#0a0a0a" stroke-width="2.4" stroke-linecap="round" stroke-linejoin="round"><circle cx="12" cy="12" r="1"/><circle cx="19" cy="12" r="1"/><circle cx="5" cy="12" r="1"/></svg>
<div class="b" style="left:900px;top:528.3px;width:475.2px;height:1.8px;background:#e9e9ef"></div>
<div class="b" style="left:900px;top:1374.7px;width:475.2px;height:1.8px;background:#e9e9ef"></div>
<div class="b" style="left:919.6px;top:1397.2px;width:374px;height:54.2px;background:#fdfdfe;border:1.8px solid #e6e6ec;border-radius:13px;box-shadow:0 1.8px 3.6px rgba(15,23,42,.04)"></div>
<div class="b" style="left:1307.4px;top:1397.2px;width:48.2px;height:54.8px;background:#18181b;border-radius:11px;box-shadow:0 1.8px 3.6px rgba(0,0,0,.18)"></div>
<svg class="i" style="left:1318px;top:1411.1px" width="27" height="27" viewBox="0 0 24 24" fill="none" stroke="#fff" stroke-width="2.2" stroke-linecap="round" stroke-linejoin="round"><path d="M5 12h14"/><path d="M12 5v14"/></svg>
<div class="b" style="left:1406.0px;top:447.6px;width:478.8px;height:1025.2px;background:#fdfdfe;border:1.8px solid #e4e4ec;border-top:5.6px solid #3b82f6;border-radius:20px"></div>
<div class="btn" style="left:1427.8px;top:467.1px;width:41.0px;height:47.7px;border-radius:11px"></div>
<svg class="i" style="left:1434.9px;top:477.2px" width="27.4" height="27.4" viewBox="0 0 24 24" fill="#0a0a0a" stroke="#0a0a0a" stroke-width="2" stroke-linecap="round" stroke-linejoin="round"><circle cx="9" cy="12" r="1"/><circle cx="9" cy="5" r="1"/><circle cx="9" cy="19" r="1"/><circle cx="15" cy="12" r="1"/><circle cx="15" cy="5" r="1"/><circle cx="15" cy="19" r="1"/></svg>
<div class="b" style="left:1482.4px;top:471.3px;width:290.2px;height:43.2px;background:#fdfdfe;border-radius:11px;box-shadow:0 1.8px 3.6px rgba(15,23,42,.05)"></div>
<div class="b" style="left:1787.6px;top:481.4px;width:19.2px;height:19.2px;background:#3b82f6;border-radius:50%"></div>
<div class="btn" style="left:1814.7px;top:467.1px;width:48.6px;height:47.7px;border-radius:11px"></div>
<svg class="i" style="left:1825.5px;top:477.3px" width="27" height="27" viewBox="0 0 24 24" fill="#0a0a0a" stroke="#0a0a0a" stroke-width="2.4" stroke-linecap="round" stroke-linejoin="round"><circle cx="12" cy="12" r="1"/><circle cx="19" cy="12" r="1"/><circle cx="5" cy="12" r="1"/></svg>
<div class="b" style="left:1407.8px;top:528.3px;width:475.2px;height:1.8px;background:#e9e9ef"></div>
<div class="b" style="left:1407.8px;top:1374.7px;width:475.2px;height:1.8px;background:#e9e9ef"></div>
<div class="b" style="left:1427.4px;top:1397.2px;width:374px;height:54.2px;background:#fdfdfe;border:1.8px solid #e6e6ec;border-radius:13px;box-shadow:0 1.8px 3.6px rgba(15,23,42,.04)"></div>
<div class="b" style="left:1815.2px;top:1397.2px;width:48.2px;height:54.8px;background:#18181b;border-radius:11px;box-shadow:0 1.8px 3.6px rgba(0,0,0,.18)"></div>
<svg class="i" style="left:1825.8px;top:1411.1px" width="27" height="27" viewBox="0 0 24 24" fill="none" stroke="#fff" stroke-width="2.2" stroke-linecap="round" stroke-linejoin="round"><path d="M5 12h14"/><path d="M12 5v14"/></svg>
<div class="b" style="left:1913.4px;top:447.6px;width:478.8px;height:1025.2px;background:#fdfdfe;border:1.8px solid #e4e4ec;border-top:5.6px solid #f59e0b;border-radius:20px"></div>
<div class="btn" style="left:1935.2px;top:467.1px;width:41.0px;height:47.7px;border-radius:11px"></div>
<svg class="i" style="left:1942.3px;top:477.2px" width="27.4" height="27.4" viewBox="0 0 24 24" fill="#0a0a0a" stroke="#0a0a0a" stroke-width="2" stroke-linecap="round" stroke-linejoin="round"><circle cx="9" cy="12" r="1"/><circle cx="9" cy="5" r="1"/><circle cx="9" cy="19" r="1"/><circle cx="15" cy="12" r="1"/><circle cx="15" cy="5" r="1"/><circle cx="15" cy="19" r="1"/></svg>
<div class="b" style="left:1989.8px;top:471.3px;width:290.2px;height:43.2px;background:#fdfdfe;border-radius:11px;box-shadow:0 1.8px 3.6px rgba(15,23,42,.05)"></div>
<div class="b" style="left:2295px;top:481.4px;width:19.2px;height:19.2px;background:#f59e0b;border-radius:50%"></div>
<div class="btn" style="left:2322.1px;top:467.1px;width:48.6px;height:47.7px;border-radius:11px"></div>
<svg class="i" style="left:2332.9px;top:477.3px" width="27" height="27" viewBox="0 0 24 24" fill="#0a0a0a" stroke="#0a0a0a" stroke-width="2.4" stroke-linecap="round" stroke-linejoin="round"><circle cx="12" cy="12" r="1"/><circle cx="19" cy="12" r="1"/><circle cx="5" cy="12" r="1"/></svg>
<div class="b" style="left:1915.2px;top:528.3px;width:475.2px;height:1.8px;background:#e9e9ef"></div>
<div class="b" style="left:1915.2px;top:1374.7px;width:475.2px;height:1.8px;background:#e9e9ef"></div>
<div class="b" style="left:1934.8px;top:1397.2px;width:374px;height:54.2px;background:#fdfdfe;border:1.8px solid #e6e6ec;border-radius:13px;box-shadow:0 1.8px 3.6px rgba(15,23,42,.04)"></div>
<div class="b" style="left:2322.6px;top:1397.2px;width:48.2px;height:54.8px;background:#18181b;border-radius:11px;box-shadow:0 1.8px 3.6px rgba(0,0,0,.18)"></div>
<svg class="i" style="left:2333.2px;top:1411.1px" width="27" height="27" viewBox="0 0 24 24" fill="none" stroke="#fff" stroke-width="2.2" stroke-linecap="round" stroke-linejoin="round"><path d="M5 12h14"/><path d="M12 5v14"/></svg>
<div class="b" style="left:2421.2px;top:447.6px;width:478.8px;height:1025.2px;background:#fdfdfe;border:1.8px solid #e4e4ec;border-top:5.6px solid #10b981;border-radius:20px"></div>
<div class="btn" style="left:2443.0px;top:467.1px;width:41.0px;height:47.7px;border-radius:11px"></div>
<svg class="i" style="left:2450.1px;top:477.2px" width="27.4" height="27.4" viewBox="0 0 24 24" fill="#0a0a0a" stroke="#0a0a0a" stroke-width="2" stroke-linecap="round" stroke-linejoin="round"><circle cx="9" cy="12" r="1"/><circle cx="9" cy="5" r="1"/><circle cx="9" cy="19" r="1"/><circle cx="15" cy="12" r="1"/><circle cx="15" cy="5" r="1"/><circle cx="15" cy="19" r="1"/></svg>
<div class="b" style="left:2497.6px;top:471.3px;width:290.2px;height:43.2px;background:#fdfdfe;border-radius:11px;box-shadow:0 1.8px 3.6px rgba(15,23,42,.05)"></div>
<div class="b" style="left:2802.8px;top:481.4px;width:19.2px;height:19.2px;background:#10b981;border-radius:50%"></div>
<div class="btn" style="left:2829.9px;top:467.1px;width:48.6px;height:47.7px;border-radius:11px"></div>
<svg class="i" style="left:2840.7px;top:477.3px" width="27" height="27" viewBox="0 0 24 24" fill="#0a0a0a" stroke="#0a0a0a" stroke-width="2.4" stroke-linecap="round" stroke-linejoin="round"><circle cx="12" cy="12" r="1"/><circle cx="19" cy="12" r="1"/><circle cx="5" cy="12" r="1"/></svg>
<div class="b" style="left:2423px;top:528.3px;width:475.2px;height:1.8px;background:#e9e9ef"></div>
<div class="b" style="left:2423px;top:1374.7px;width:475.2px;height:1.8px;background:#e9e9ef"></div>
<div class="b" style="left:2442.6px;top:1397.2px;width:374px;height:54.2px;background:#fdfdfe;border:1.8px solid #e6e6ec;border-radius:13px;box-shadow:0 1.8px 3.6px rgba(15,23,42,.04)"></div>
<div class="b" style="left:2830.4px;top:1397.2px;width:48.2px;height:54.8px;background:#18181b;border-radius:11px;box-shadow:0 1.8px 3.6px rgba(0,0,0,.18)"></div>
<svg class="i" style="left:2841px;top:1411.1px" width="27" height="27" viewBox="0 0 24 24" fill="none" stroke="#fff" stroke-width="2.2" stroke-linecap="round" stroke-linejoin="round"><path d="M5 12h14"/><path d="M12 5v14"/></svg>
<div class="b" style="left:919.9px;top:544px;width:435.2px;height:172.6px;background:#fff;border:1.8px solid #e6e6ec;border-radius:12.5px;box-shadow:0 1.8px 3.6px rgba(15,23,42,.07);overflow:hidden"></div>
<div class="b" style="left:941.7px;top:566.3px;width:73.2px;height:28.9px;background:#4338ca;border-radius:14.5px"></div>
<svg class="i" style="left:942.2px;top:658.5px" width="25.2" height="25.2" viewBox="0 0 24 24" fill="none" stroke="#6b7280" stroke-width="1.9" stroke-linecap="round" stroke-linejoin="round"><path d="M8 2v4"/><path d="M16 2v4"/><rect width="18" height="18" x="3" y="4" rx="2"/><path d="M3 10h18"/></svg>
<div class="b" style="left:919.9px;top:731.4px;width:435.2px;height:171.7px;background:#fff;border:1.8px solid #e6e6ec;border-radius:12.5px;box-shadow:0 1.8px 3.6px rgba(15,23,42,.07);overflow:hidden"></div>
<div class="b" style="left:941.7px;top:753.7px;width:85.2px;height:28.9px;background:#0f766e;border-radius:14.5px"></div>
<svg class="i" style="left:942.2px;top:845.9px" width="25.2" height="25.2" viewBox="0 0 24 24" fill="none" stroke="#6b7280" stroke-width="1.9" stroke-linecap="round" stroke-linejoin="round"><path d="M8 2v4"/><path d="M16 2v4"/><rect width="18" height="18" x="3" y="4" rx="2"/><path d="M3 10h18"/></svg>
<svg class="i" style="left:1054.5px;top:845.9px" width="25.2" height="25.2" viewBox="0 0 24 24" fill="none" stroke="#6b7280" stroke-width="1.9" stroke-linecap="round" stroke-linejoin="round"><path d="M21 7.5V6a2 2 0 0 0-2-2H5a2 2 0 0 0-2 2v14a2 2 0 0 0 2 2h3.5"/><path d="M16 2v4"/><path d="M8 2v4"/><path d="M3 10h5"/><path d="M17.5 17.5 16 16.3V14"/><circle cx="16" cy="16" r="6"/></svg>
<div class="b" style="left:1427.7px;top:544px;width:435.2px;height:176px;background:#fff;border:1.8px solid #e6e6ec;border-radius:12.5px;box-shadow:0 1.8px 3.6px rgba(15,23,42,.07);overflow:hidden"></div>
<div class="b" style="left:1428.9px;top:545.4px;width:432.8px;height:10.8px;background:#fdf0c4;border-radius:11px 11px 0 0"></div>
<div class="b" style="left:1449.5px;top:570.9px;width:85.2px;height:28.9px;background:#0f766e;border-radius:14.5px"></div>
<div class="b" style="left:1541.9px;top:570.9px;width:75.8px;height:28.9px;background:#b91c1c;border-radius:14.5px"></div>
<svg class="i" style="left:1450px;top:662.4px" width="25.2" height="25.2" viewBox="0 0 24 24" fill="none" stroke="#6b7280" stroke-width="1.9" stroke-linecap="round" stroke-linejoin="round"><path d="M8 2v4"/><path d="M16 2v4"/><rect width="18" height="18" x="3" y="4" rx="2"/><path d="M3 10h18"/></svg>
<svg class="i" style="left:1562.3px;top:662.4px" width="25.2" height="25.2" viewBox="0 0 24 24" fill="none" stroke="#6b7280" stroke-width="1.9" stroke-linecap="round" stroke-linejoin="round"><path d="M21 7.5V6a2 2 0 0 0-2-2H5a2 2 0 0 0-2 2v14a2 2 0 0 0 2 2h3.5"/><path d="M16 2v4"/><path d="M8 2v4"/><path d="M3 10h5"/><path d="M17.5 17.5 16 16.3V14"/><circle cx="16" cy="16" r="6"/></svg>
<div class="b" style="left:1427.7px;top:734.1px;width:435.2px;height:173.3px;background:#fff;border:1.8px solid #e6e6ec;border-radius:12.5px;box-shadow:0 1.8px 3.6px rgba(15,23,42,.07);overflow:hidden"></div>
<div class="b" style="left:1449.5px;top:756.4px;width:80.5px;height:28.9px;background:#c2410c;border-radius:14.5px"></div>
<svg class="i" style="left:1450px;top:848.6px" width="25.2" height="25.2" viewBox="0 0 24 24" fill="none" stroke="#6b7280" stroke-width="1.9" stroke-linecap="round" stroke-linejoin="round"><path d="M8 2v4"/><path d="M16 2v4"/><rect width="18" height="18" x="3" y="4" rx="2"/><path d="M3 10h18"/></svg>
<svg class="i" style="left:1562.3px;top:848.6px" width="25.2" height="25.2" viewBox="0 0 24 24" fill="none" stroke="#6b7280" stroke-width="1.9" stroke-linecap="round" stroke-linejoin="round"><path d="M21 7.5V6a2 2 0 0 0-2-2H5a2 2 0 0 0-2 2v14a2 2 0 0 0 2 2h3.5"/><path d="M16 2v4"/><path d="M8 2v4"/><path d="M3 10h5"/><path d="M17.5 17.5 16 16.3V14"/><circle cx="16" cy="16" r="6"/></svg>
<div class="b" style="left:1427.7px;top:921.6px;width:435.2px;height:171.4px;background:#fff;border:1.8px solid #e6e6ec;border-radius:12.5px;box-shadow:0 1.8px 3.6px rgba(15,23,42,.07);overflow:hidden"></div>
<div class="b" style="left:1449.5px;top:943.9px;width:73.2px;height:28.9px;background:#4338ca;border-radius:14.5px"></div>
<svg class="i" style="left:1450px;top:1036.1px" width="25.2" height="25.2" viewBox="0 0 24 24" fill="none" stroke="#6b7280" stroke-width="1.9" stroke-linecap="round" stroke-linejoin="round"><path d="M8 2v4"/><path d="M16 2v4"/><rect width="18" height="18" x="3" y="4" rx="2"/><path d="M3 10h18"/></svg>
<svg class="i" style="left:1562.3px;top:1036.1px" width="25.2" height="25.2" viewBox="0 0 24 24" fill="none" stroke="#6b7280" stroke-width="1.9" stroke-linecap="round" stroke-linejoin="round"><path d="M21 7.5V6a2 2 0 0 0-2-2H5a2 2 0 0 0-2 2v14a2 2 0 0 0 2 2h3.5"/><path d="M16 2v4"/><path d="M8 2v4"/><path d="M3 10h5"/><path d="M17.5 17.5 16 16.3V14"/><circle cx="16" cy="16" r="6"/></svg>
<div class="b" style="left:1935.1px;top:544px;width:435.2px;height:173px;background:#fff;border:1.8px solid #e6e6ec;border-radius:12.5px;box-shadow:0 1.8px 3.6px rgba(15,23,42,.07);overflow:hidden"></div>
<div class="b" style="left:1956.9px;top:566.3px;width:80.5px;height:28.9px;background:#c2410c;border-radius:14.5px"></div>
<svg class="i" style="left:1957.4px;top:658.5px" width="25.2" height="25.2" viewBox="0 0 24 24" fill="none" stroke="#6b7280" stroke-width="1.9" stroke-linecap="round" stroke-linejoin="round"><path d="M8 2v4"/><path d="M16 2v4"/><rect width="18" height="18" x="3" y="4" rx="2"/><path d="M3 10h18"/></svg>
<svg class="i" style="left:2069.7px;top:658.5px" width="25.2" height="25.2" viewBox="0 0 24 24" fill="none" stroke="#6b7280" stroke-width="1.9" stroke-linecap="round" stroke-linejoin="round"><path d="M21 7.5V6a2 2 0 0 0-2-2H5a2 2 0 0 0-2 2v14a2 2 0 0 0 2 2h3.5"/><path d="M16 2v4"/><path d="M8 2v4"/><path d="M3 10h5"/><path d="M17.5 17.5 16 16.3V14"/><circle cx="16" cy="16" r="6"/></svg>
<div class="b" style="left:1935.1px;top:731.5px;width:435.2px;height:205.6px;background:#fff;border:1.8px solid #e6e6ec;border-radius:12.5px;box-shadow:0 1.8px 3.6px rgba(15,23,42,.07);overflow:hidden"></div>
<div class="b" style="left:1956.9px;top:753.8px;width:75.8px;height:28.9px;background:#b91c1c;border-radius:14.5px"></div>
<svg class="i" style="left:1957.4px;top:880px" width="25.2" height="25.2" viewBox="0 0 24 24" fill="none" stroke="#6b7280" stroke-width="1.9" stroke-linecap="round" stroke-linejoin="round"><path d="M8 2v4"/><path d="M16 2v4"/><rect width="18" height="18" x="3" y="4" rx="2"/><path d="M3 10h18"/></svg>
<svg class="i" style="left:2069.7px;top:880px" width="25.2" height="25.2" viewBox="0 0 24 24" fill="none" stroke="#6b7280" stroke-width="1.9" stroke-linecap="round" stroke-linejoin="round"><path d="M21 7.5V6a2 2 0 0 0-2-2H5a2 2 0 0 0-2 2v14a2 2 0 0 0 2 2h3.5"/><path d="M16 2v4"/><path d="M8 2v4"/><path d="M3 10h5"/><path d="M17.5 17.5 16 16.3V14"/><circle cx="16" cy="16" r="6"/></svg>
<div class="b" style="left:2442.9px;top:544px;width:435.2px;height:173px;background:#fff;border:1.8px solid #e6e6ec;border-radius:12.5px;box-shadow:0 1.8px 3.6px rgba(15,23,42,.07);overflow:hidden"></div>
<div class="b" style="left:2464.7px;top:566.3px;width:73.2px;height:28.9px;background:#4338ca;border-radius:14.5px"></div>
<svg class="i" style="left:2465.2px;top:658.5px" width="25.2" height="25.2" viewBox="0 0 24 24" fill="none" stroke="#6b7280" stroke-width="1.9" stroke-linecap="round" stroke-linejoin="round"><path d="M8 2v4"/><path d="M16 2v4"/><rect width="18" height="18" x="3" y="4" rx="2"/><path d="M3 10h18"/></svg>
<div class="b" style="left:2442.9px;top:731.5px;width:435.2px;height:171.6px;background:#fff;border:1.8px solid #e6e6ec;border-radius:12.5px;box-shadow:0 1.8px 3.6px rgba(15,23,42,.07);overflow:hidden"></div>
<div class="b" style="left:2464.7px;top:753.8px;width:85.2px;height:28.9px;background:#0f766e;border-radius:14.5px"></div>
<svg class="i" style="left:2465.2px;top:846px" width="25.2" height="25.2" viewBox="0 0 24 24" fill="none" stroke="#6b7280" stroke-width="1.9" stroke-linecap="round" stroke-linejoin="round"><path d="M8 2v4"/><path d="M16 2v4"/><rect width="18" height="18" x="3" y="4" rx="2"/><path d="M3 10h18"/></svg>
</div>
</div>
<div id="txt">
<span class="t" style="left:108.4px;top:49.83px;font-size:32.6px;line-height:42px;color:#262b2f;letter-spacing:0.83px;-webkit-text-stroke:0.8px #262b2f;">Raq.com</span>
<span class="t" style="left:61.2px;top:157.06px;font-size:16.5px;line-height:21px;color:#fff;-webkit-text-stroke:0.4px #fff;">S</span>
<span class="t" style="left:99.2px;top:152.05px;font-size:24.8px;line-height:32px;color:#374151;letter-spacing:0.73px;-webkit-text-stroke:0.3px #374151;">Sarah's Account</span>
<span class="t" style="left:87px;top:236.05px;font-size:25.2px;line-height:33px;color:#fff;letter-spacing:0.07px;-webkit-text-stroke:0.2px #fff;">Launchpad</span>
<span class="t" style="left:42.6px;top:323.7px;font-size:20.24px;line-height:26px;color:#6b7280;letter-spacing:-0.12px;-webkit-text-stroke:0.3px #6b7280;">AI</span>
<span class="t" style="left:84.3px;top:374.75px;font-size:25.12px;line-height:33px;color:#374151;letter-spacing:-0.12px;-webkit-text-stroke:0.15px #374151;">Dual AI Chat</span>
<span class="t" style="left:84.3px;top:438.05px;font-size:24.82px;line-height:32px;color:#374151;letter-spacing:-0.12px;-webkit-text-stroke:0.15px #374151;">AI Pro Reasoning</span>
<span class="t" style="left:84.3px;top:499.55px;font-size:25.2px;line-height:33px;color:#374151;letter-spacing:0.07px;-webkit-text-stroke:0.15px #374151;">Health Insights</span>
<span class="t" style="left:84.3px;top:561.45px;font-size:25.2px;line-height:33px;color:#374151;letter-spacing:0.15px;-webkit-text-stroke:0.15px #374151;">Prompt Library</span>
<span class="t" style="left:84.3px;top:623.55px;font-size:25.2px;line-height:33px;color:#374151;letter-spacing:0.11px;-webkit-text-stroke:0.15px #374151;">Skill Library</span>
<span class="t" style="left:84.3px;top:685.95px;font-size:24.98px;line-height:32px;color:#374151;letter-spacing:-0.12px;-webkit-text-stroke:0.15px #374151;">Personas</span>
<span class="t" style="left:84.3px;top:837.15px;font-size:25.2px;line-height:33px;color:#374151;letter-spacing:0.11px;-webkit-text-stroke:0.15px #374151;">Automations</span>
<span class="t" style="left:84.3px;top:899.35px;font-size:25.2px;line-height:33px;color:#374151;letter-spacing:-0.03px;-webkit-text-stroke:0.15px #374151;">Team Comms</span>
<span class="t" style="left:84.3px;top:961.15px;font-size:25.2px;line-height:33px;color:#111827;letter-spacing:0.16px;-webkit-text-stroke:0.45px #111827;">Task Board</span>
<span class="t" style="left:84.3px;top:1023.15px;font-size:25.19px;line-height:33px;color:#374151;letter-spacing:-0.12px;-webkit-text-stroke:0.15px #374151;">Project Base</span>
<span class="t" style="left:84.3px;top:1085.45px;font-size:25.2px;line-height:33px;color:#374151;letter-spacing:0.23px;-webkit-text-stroke:0.15px #374151;">Knowledge</span>
<span class="t" style="left:84.3px;top:1147.95px;font-size:25.2px;line-height:33px;color:#374151;letter-spacing:0.07px;-webkit-text-stroke:0.15px #374151;">Spreadsheet AI</span>
<span class="t" style="left:84.3px;top:1210.75px;font-size:25.2px;line-height:33px;color:#374151;letter-spacing:0.24px;-webkit-text-stroke:0.15px #374151;">Transcribe</span>
<span class="t" style="left:84.3px;top:1271.45px;font-size:25.13px;line-height:33px;color:#374151;letter-spacing:-0.12px;-webkit-text-stroke:0.15px #374151;">File Drop</span>
<span class="t" style="left:42px;top:784.62px;font-size:21.6px;line-height:28px;color:#6b7280;letter-spacing:0.58px;-webkit-text-stroke:0.3px #6b7280;">Productivity</span>
<span class="t" style="left:398.89px;top:901.82px;font-size:21.6px;line-height:28px;color:#fff;-webkit-text-stroke:0.3px #fff;">3</span>
<span class="t" style="left:83.9px;top:1347.25px;font-size:24.6px;line-height:32px;color:#fff;letter-spacing:0.46px;-webkit-text-stroke:0.22px #fff;">Select Tools</span>
<span class="t" style="left:366.8px;top:1352.17px;font-size:17px;line-height:22px;color:#f4f4f5;letter-spacing:0.02px;">41/41</span>
<span class="t" style="left:111.2px;top:1418.45px;font-size:24.6px;line-height:32px;color:#374151;letter-spacing:0.52px;-webkit-text-stroke:0.4px #374151;">Sarah Mitchell</span>
<span class="t" style="left:111px;top:1448.52px;font-size:21.6px;line-height:28px;color:#6b7280;letter-spacing:0.17px;">sarah.mitchell@westbur...</span>
<div class="clip">
<span class="t" style="left:595.5px;top:38.55px;font-size:25.2px;line-height:33px;color:#6b7280;letter-spacing:0.17px;">Tools</span>
<span class="t" style="left:715.5px;top:38.55px;font-size:25.2px;line-height:33px;color:#6b7280;letter-spacing:0.05px;">Task Board</span>
<span class="t" style="left:902.4px;top:38.55px;font-size:25.2px;line-height:33px;color:#0a0a0a;letter-spacing:0.21px;">Moving House</span>
<span class="t" style="left:2514.09px;top:32.86px;font-size:16.2px;line-height:21px;color:#fff;-webkit-text-stroke:0.2px #fff;">5</span>
<span class="t" style="left:476.7px;top:138.64px;font-size:23.9px;line-height:31px;color:#0a0a0a;letter-spacing:0.77px;-webkit-text-stroke:0.45px #0a0a0a;">Boards</span>
<span class="t" style="left:740px;top:139.62px;font-size:21.56px;line-height:28px;color:#0a0a0a;letter-spacing:-0.12px;-webkit-text-stroke:0.4px #0a0a0a;">New</span>
<span class="t" style="left:561.75px;top:236.41px;font-size:21.4px;line-height:28px;color:#0a0a0a;letter-spacing:0.16px;-webkit-text-stroke:0.4px #0a0a0a;">All</span>
<span class="t" style="left:743.5px;top:236.41px;font-size:21.4px;line-height:28px;color:#6b7280;letter-spacing:-0.01px;-webkit-text-stroke:0.3px #6b7280;">Pinned</span>
<span class="t" style="left:527.75px;top:321.41px;font-size:21.4px;line-height:28px;color:#0a0a0a;letter-spacing:0.16px;-webkit-text-stroke:0.4px #0a0a0a;">All</span>
<span class="t" style="left:649.15px;top:321.41px;font-size:21.4px;line-height:28px;color:#6b7280;letter-spacing:0.06px;-webkit-text-stroke:0.3px #6b7280;">Team</span>
<span class="t" style="left:776.7px;top:321.41px;font-size:21.4px;line-height:28px;color:#6b7280;letter-spacing:0.23px;-webkit-text-stroke:0.3px #6b7280;">Private</span>
<span class="t" style="left:526.5px;top:406.75px;font-size:25.1px;line-height:33px;color:#6b7280;letter-spacing:-0.12px;">Search...</span>
<span class="t" style="left:525.5px;top:490.45px;font-size:25.2px;line-height:33px;color:#0a0a0a;-webkit-text-stroke:0.25px #0a0a0a;">Family Admin</span>
<span class="t" style="left:525.5px;top:524.32px;font-size:21.6px;line-height:28px;color:#6b7280;letter-spacing:0.06px;">0 lists · 0 cards</span>
<span class="t" style="left:525.5px;top:578.35px;font-size:25.2px;line-height:33px;color:#0a0a0a;letter-spacing:0.2px;-webkit-text-stroke:0.25px #0a0a0a;">Moving House</span>
<span class="t" style="left:525.5px;top:612.52px;font-size:21.6px;line-height:28px;color:#6b7280;letter-spacing:0.1px;">4 lists · 9 cards</span>
<span class="t" style="left:525.5px;top:668.15px;font-size:25.2px;line-height:33px;color:#0a0a0a;letter-spacing:-0.03px;-webkit-text-stroke:0.25px #0a0a0a;">Website Redesign Ta...</span>
<span class="t" style="left:525.5px;top:702.12px;font-size:21.6px;line-height:28px;color:#6b7280;letter-spacing:0.06px;">0 lists · 0 cards</span>
<span class="t" style="left:1016px;top:131.15px;font-size:25.12px;line-height:33px;color:#0a0a0a;letter-spacing:-0.12px;">Kanban</span>
<span class="t" style="left:1298px;top:134.31px;font-size:21.05px;line-height:27px;color:#0a0a0a;letter-spacing:-0.12px;-webkit-text-stroke:0.4px #0a0a0a;">Share</span>
<span class="t" style="left:1465.4px;top:134.8px;font-size:20.16px;line-height:26px;color:#0a0a0a;letter-spacing:-0.12px;-webkit-text-stroke:0.4px #0a0a0a;">Pin</span>
<span class="t" style="left:2188px;top:133.82px;font-size:21.8px;line-height:28px;color:#0a0a0a;letter-spacing:0.11px;-webkit-text-stroke:0.4px #0a0a0a;">More</span>
<span class="t" style="left:2349px;top:136.77px;font-size:16.91px;line-height:22px;color:#fff;letter-spacing:-0.12px;-webkit-text-stroke:0.4px #fff;">Team</span>
<span class="t" style="left:2476.6px;top:136.28px;font-size:17.8px;line-height:23px;color:#6b7280;letter-spacing:-0.12px;-webkit-text-stroke:0.3px #6b7280;">Private</span>
<span class="t" style="left:1021.6px;top:249.02px;font-size:21.8px;line-height:28px;color:#0a0a0a;letter-spacing:0.28px;-webkit-text-stroke:0.4px #0a0a0a;">Active Tasks</span>
<span class="t" style="left:1305px;top:249.02px;font-size:21.8px;line-height:28px;color:#0a0a0a;letter-spacing:0.21px;-webkit-text-stroke:0.4px #0a0a0a;">Views</span>
<span class="t" style="left:1475.2px;top:249.02px;font-size:21.8px;line-height:28px;color:#0a0a0a;letter-spacing:0.01px;-webkit-text-stroke:0.4px #0a0a0a;">Filters</span>
<span class="t" style="left:1646px;top:249.02px;font-size:21.8px;line-height:28px;color:#0a0a0a;letter-spacing:0.04px;-webkit-text-stroke:0.4px #0a0a0a;">More</span>
<span class="t" style="left:2436px;top:249.02px;font-size:21.65px;line-height:28px;color:#0a0a0a;letter-spacing:-0.12px;-webkit-text-stroke:0.4px #0a0a0a;">Search</span>
<span class="t" style="left:999.5px;top:361.82px;font-size:21.8px;line-height:28px;color:#0a0a0a;letter-spacing:0.08px;-webkit-text-stroke:0.4px #0a0a0a;">Select Tasks</span>
<span class="t" style="left:2450px;top:361.62px;font-size:21.8px;line-height:28px;color:#fff;letter-spacing:0.1px;-webkit-text-stroke:0.4px #fff;">Add List</span>
<span class="t" style="left:976.8px;top:475.25px;font-size:24.95px;line-height:32px;color:#0a0a0a;letter-spacing:-0.12px;-webkit-text-stroke:0.4px #0a0a0a;">To Plan</span>
<div class="b" style="left:942.0px;top:1399px;width:331px;height:50px;overflow:hidden"><span class="t" style="left:0;top:8.5px;font-size:25.2px;line-height:33px;color:#6b7280;letter-spacing:0.25px">Add a card — e.g. "send email"</span></div>
<span class="t" style="left:1484.6px;top:474.75px;font-size:25.2px;line-height:33px;color:#0a0a0a;letter-spacing:0.04px;-webkit-text-stroke:0.4px #0a0a0a;">In Progress</span>
<div class="b" style="left:1449.8px;top:1399px;width:331px;height:50px;overflow:hidden"><span class="t" style="left:0;top:8.5px;font-size:25.2px;line-height:33px;color:#6b7280;letter-spacing:0.25px">Add a card — e.g. "send email"</span></div>
<span class="t" style="left:1992px;top:474.75px;font-size:25.2px;line-height:33px;color:#0a0a0a;letter-spacing:0.21px;-webkit-text-stroke:0.4px #0a0a0a;">Booked</span>
<div class="b" style="left:1957.2px;top:1399px;width:331px;height:50px;overflow:hidden"><span class="t" style="left:0;top:8.5px;font-size:25.2px;line-height:33px;color:#6b7280;letter-spacing:0.25px">Add a card — e.g. "send email"</span></div>
<span class="t" style="left:2499.8px;top:474.75px;font-size:25.2px;line-height:33px;color:#0a0a0a;letter-spacing:-0.05px;-webkit-text-stroke:0.4px #0a0a0a;">Done</span>
<div class="b" style="left:2465.0px;top:1399px;width:331px;height:50px;overflow:hidden"><span class="t" style="left:0;top:8.5px;font-size:25.2px;line-height:33px;color:#6b7280;letter-spacing:0.25px">Add a card — e.g. "send email"</span></div>
<span class="t" style="left:955.85px;top:571.45px;font-size:15.3px;line-height:20px;color:#fff;letter-spacing:0.38px;-webkit-text-stroke:0.35px #fff;">Admin</span>
<span class="t" style="left:942.1px;top:610.15px;font-size:25.2px;line-height:33px;color:#0a0a0a;letter-spacing:0.28px;-webkit-text-stroke:0.4px #0a0a0a;">Compare removal companies</span>
<span class="t" style="left:973.6px;top:658.12px;font-size:21.56px;line-height:28px;color:#6b7280;letter-spacing:-0.12px;">27 Mar</span>
<span class="t" style="left:955.8px;top:758.85px;font-size:15.3px;line-height:20px;color:#fff;letter-spacing:0.43px;-webkit-text-stroke:0.35px #fff;">Packing</span>
<span class="t" style="left:942.1px;top:797.55px;font-size:25.2px;line-height:33px;color:#0a0a0a;letter-spacing:0.31px;-webkit-text-stroke:0.4px #0a0a0a;">Order packing boxes and tape</span>
<span class="t" style="left:973.6px;top:845.52px;font-size:21.56px;line-height:28px;color:#6b7280;letter-spacing:-0.12px;">27 Mar</span>
<span class="t" style="left:1086.7px;top:845.52px;font-size:21.6px;line-height:28px;color:#6b7280;letter-spacing:0.47px;">08 Apr</span>
<span class="t" style="left:1463.6px;top:576.05px;font-size:15.3px;line-height:20px;color:#fff;letter-spacing:0.43px;-webkit-text-stroke:0.35px #fff;">Packing</span>
<span class="t" style="left:1555.5px;top:576.05px;font-size:15.3px;line-height:20px;color:#fff;letter-spacing:0.54px;-webkit-text-stroke:0.35px #fff;">Urgent</span>
<span class="t" style="left:1449.9px;top:613.65px;font-size:25.2px;line-height:33px;color:#0a0a0a;letter-spacing:0.25px;-webkit-text-stroke:0.4px #0a0a0a;">Pack kitchen boxes</span>
<span class="t" style="left:1481.4px;top:662.02px;font-size:21.56px;line-height:28px;color:#6b7280;letter-spacing:-0.12px;">27 Mar</span>
<span class="t" style="left:1594.5px;top:662.02px;font-size:21.6px;line-height:28px;color:#6b7280;letter-spacing:0.11px;">29 Mar</span>
<span class="t" style="left:1463.45px;top:761.55px;font-size:15.3px;line-height:20px;color:#fff;letter-spacing:0.41px;-webkit-text-stroke:0.35px #fff;">Utilities</span>
<span class="t" style="left:1449.9px;top:800.25px;font-size:25.2px;line-height:33px;color:#0a0a0a;letter-spacing:0.3px;-webkit-text-stroke:0.4px #0a0a0a;">Cancel broadband at old address</span>
<span class="t" style="left:1481.4px;top:848.22px;font-size:21.56px;line-height:28px;color:#6b7280;letter-spacing:-0.12px;">27 Mar</span>
<span class="t" style="left:1594.5px;top:848.71px;font-size:20.82px;line-height:27px;color:#6b7280;letter-spacing:-0.12px;">31 Mar</span>
<span class="t" style="left:1463.65px;top:949.05px;font-size:15.3px;line-height:20px;color:#fff;letter-spacing:0.38px;-webkit-text-stroke:0.35px #fff;">Admin</span>
<span class="t" style="left:1449.9px;top:987.75px;font-size:25.2px;line-height:33px;color:#0a0a0a;letter-spacing:0.2px;-webkit-text-stroke:0.4px #0a0a0a;">Book Royal Mail redirection</span>
<span class="t" style="left:1481.4px;top:1035.72px;font-size:21.56px;line-height:28px;color:#6b7280;letter-spacing:-0.12px;">27 Mar</span>
<span class="t" style="left:1594.5px;top:1035.71px;font-size:21.48px;line-height:28px;color:#6b7280;letter-spacing:-0.12px;">01 Apr</span>
<span class="t" style="left:1970.85px;top:571.45px;font-size:15.3px;line-height:20px;color:#fff;letter-spacing:0.41px;-webkit-text-stroke:0.35px #fff;">Utilities</span>
<span class="t" style="left:1957.3px;top:610.15px;font-size:25.2px;line-height:33px;color:#0a0a0a;letter-spacing:0.36px;-webkit-text-stroke:0.4px #0a0a0a;">Arrange final meter readings</span>
<span class="t" style="left:1988.8px;top:658.12px;font-size:21.56px;line-height:28px;color:#6b7280;letter-spacing:-0.12px;">27 Mar</span>
<span class="t" style="left:2101.9px;top:658.12px;font-size:21.6px;line-height:28px;color:#6b7280;letter-spacing:0.11px;">28 Mar</span>
<span class="t" style="left:1970.5px;top:758.95px;font-size:15.3px;line-height:20px;color:#fff;letter-spacing:0.54px;-webkit-text-stroke:0.35px #fff;">Urgent</span>
<span class="t" style="left:1957.3px;top:797.65px;font-size:25.2px;line-height:33px;color:#0a0a0a;letter-spacing:0.45px;-webkit-text-stroke:0.4px #0a0a0a;">Confirm moving van arrival</span>
<span class="t" style="left:1957.3px;top:831.65px;font-size:25.2px;line-height:33px;color:#0a0a0a;letter-spacing:0.85px;-webkit-text-stroke:0.4px #0a0a0a;">window</span>
<span class="t" style="left:1988.8px;top:879.62px;font-size:21.56px;line-height:28px;color:#6b7280;letter-spacing:-0.12px;">27 Mar</span>
<span class="t" style="left:2101.9px;top:879.62px;font-size:21.6px;line-height:28px;color:#6b7280;letter-spacing:0.11px;">30 Mar</span>
<span class="t" style="left:2478.85px;top:571.45px;font-size:15.3px;line-height:20px;color:#fff;letter-spacing:0.38px;-webkit-text-stroke:0.35px #fff;">Admin</span>
<span class="t" style="left:2465.1px;top:610.15px;font-size:25.2px;line-height:33px;color:#0a0a0a;letter-spacing:0.95px;-webkit-text-stroke:0.4px #0a0a0a;">Transfer council tax account</span>
<span class="t" style="left:2496.6px;top:658.12px;font-size:21.56px;line-height:28px;color:#6b7280;letter-spacing:-0.12px;">27 Mar</span>
<span class="t" style="left:2478.8px;top:758.95px;font-size:15.3px;line-height:20px;color:#fff;letter-spacing:0.43px;-webkit-text-stroke:0.35px #fff;">Packing</span>
<span class="t" style="left:2465.1px;top:797.65px;font-size:25.2px;line-height:33px;color:#0a0a0a;letter-spacing:0.5px;-webkit-text-stroke:0.4px #0a0a0a;">Label storage boxes</span>
<span class="t" style="left:2496.6px;top:845.62px;font-size:21.56px;line-height:28px;color:#6b7280;letter-spacing:-0.12px;">27 Mar</span>
</div>
</div>
</body></html>
